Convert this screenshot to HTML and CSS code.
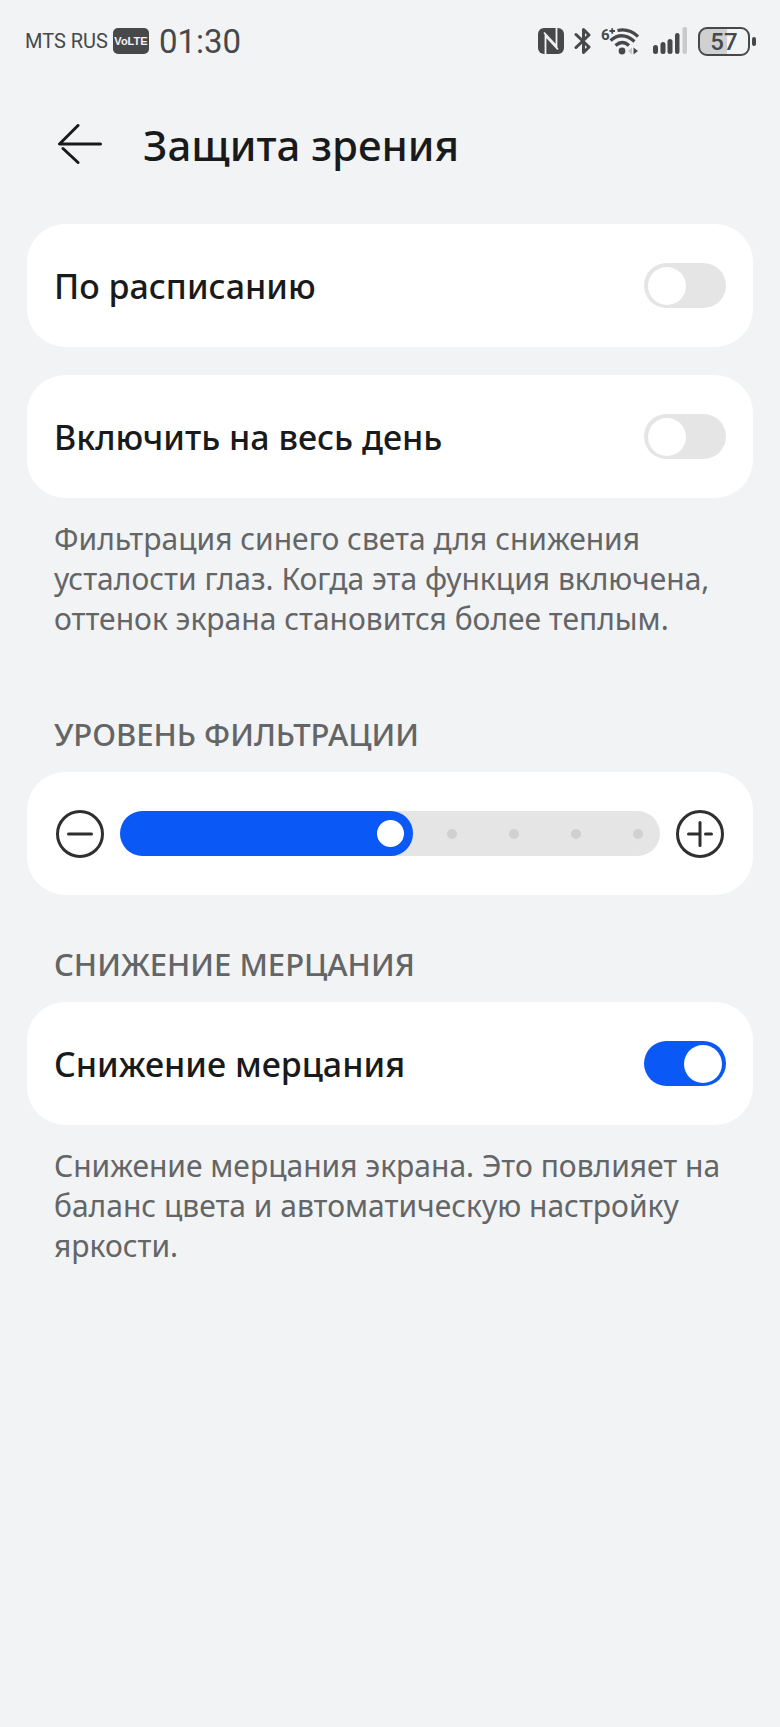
FILE: index.html
```html
<!DOCTYPE html>
<html lang="ru">
<head>
  <meta charset="UTF-8" />
  <meta name="viewport" content="width=device-width, initial-scale=1" />
  <title>Защита зрения</title>
  <link rel="stylesheet" href="styles.css">
</head>
<body>
  <div class="status-bar">
    <span class="carrier">MTS RUS</span>
    <span class="volte">VoLTE</span>
    <span class="time">01:30</span>

    <div class="status-icons">
      <svg class="icon-nfc" width="26" height="26" viewBox="0 0 26 26" aria-label="NFC">
        <rect x="0" y="0" width="26" height="26" rx="6" fill="#474849" />
        <path d="M7.500 26V8L20 21.500" fill="none" stroke="#f1f3f5" stroke-width="1.800" />
        <path d="M6 4.500L18.500 18V0" fill="none" stroke="#f1f3f5" stroke-width="1.800" />
      </svg>
      <svg class="icon-bluetooth" width="18" height="28" viewBox="0 0 18 28" fill="none" stroke="#474849" stroke-width="3" stroke-linecap="round" stroke-linejoin="round" aria-label="Bluetooth">
        <path d="M2 7.500L15 20L9.500 25.500V2.500L15 8L2 20.500" />
      </svg>
      <svg class="icon-wifi" width="38" height="30" viewBox="0 0 38 30" aria-label="Wi-Fi">
        <text class="wifi-generation" x="0" y="14">6</text>
        <path d="M8.500 5H14M11.200 2.300V7.700" stroke="#474849" stroke-width="1.800" />
        <g fill="none" stroke="#474849" stroke-width="3.200">
          <path d="M16.500 4.500Q28 2 37 10.500" />
          <path d="M9.500 14.500Q21 4.500 33.500 15.500" />
          <path d="M14.500 19.500Q21.500 13.500 28 19.500" />
        </g>
        <circle cx="21" cy="25" r="3.400" fill="#474849" />
        <path d="M31 21.500v7l-4-3.500z" fill="#c4c5c6" />
        <path d="M32.500 21.500v7l4.500-3.500z" fill="#474849" />
      </svg>
      <svg class="icon-signal" width="34" height="28" viewBox="0 0 34 28" fill="#474849" aria-label="Сигнал">
        <rect x="0" y="18" width="5" height="9" rx="2.500" />
        <rect x="7.500" y="15" width="5" height="12" rx="2.500" />
        <rect x="14.500" y="12" width="5" height="15" rx="2.500" />
        <rect x="22" y="6" width="4.500" height="21" rx="2.200" />
        <rect x="29.500" y="0" width="4.500" height="27" rx="2" fill="#c9cacb" />
      </svg>
      <div class="battery">57</div>
    </div>
  </div>

  <header class="header">
    <button class="back" aria-label="Назад">
      <svg width="44" height="40" viewBox="0 0 44 40" fill="none" stroke="#191a1b" stroke-width="3" stroke-linecap="round" stroke-linejoin="round">
        <path d="M20 1.500L1.500 20H42.500M5 24.500L20 38.500" />
      </svg>
    </button>
    <h1>Защита зрения</h1>
  </header>

  <main>
    <label class="card">
      <span class="card-name">По расписанию</span>
      <input class="switch" type="checkbox" />
    </label>

    <label class="card">
      <span class="card-name">Включить на весь день</span>
      <input class="switch" type="checkbox" />
    </label>
    <p class="hint">Фильтрация синего света для снижения усталости глаз. Когда эта функция включена, оттенок экрана становится более теплым.</p>

    <h2 class="filter-title" id="filter-title">УРОВЕНЬ ФИЛЬТРАЦИИ</h2>
    <div class="card level">
      <button class="step" aria-label="Уменьшить">
        <svg width="48" height="48" viewBox="0 0 48 48" fill="none" stroke="#2e2f30" stroke-width="3" stroke-linecap="round">
          <circle cx="24" cy="24" r="22.500" />
          <path d="M12.500 24h23" />
        </svg>
      </button>
      <div class="slider">
        <div class="dots">
          <i></i><i></i><i></i><i></i><i></i><i></i><i></i><i></i><i></i>
        </div>
        <input class="range" type="range" min="0" max="8" value="4" style="--level: 50%" aria-labelledby="filter-title" />
      </div>
      <button class="step" aria-label="Увеличить">
        <svg width="48" height="48" viewBox="0 0 48 48" fill="none" stroke="#2e2f30" stroke-width="3" stroke-linecap="round">
          <circle cx="24" cy="24" r="22.500" />
          <path d="M12.500 24H24M29.500 24h6M24 12.500v23" />
        </svg>
      </button>
    </div>

    <h2>СНИЖЕНИЕ МЕРЦАНИЯ</h2>
    <label class="card">
      <span class="card-name">Снижение мерцания</span>
      <input class="switch" type="checkbox" checked />
    </label>
    <p class="hint">Снижение мерцания экрана. Это повлияет на баланс цвета и автоматическую настройку яркости.</p>
  </main>
</body>
</html>
```

FILE: styles.css
```css
* {
  box-sizing: border-box;
}

body {
  margin: 0;
  min-height: 100vh;
  background-color: #f1f3f5;
  color: #191a1b;
  font-family: "Noto Sans", sans-serif;
}

.status-bar {
  display: flex;
  align-items: center;
  height: 82px;
  padding: 0 24px 0 25px;
  color: #474849;
}

.carrier {
  font-family: Roboto, sans-serif;
  font-size: 20px;
}

.volte {
  width: 36px;
  margin: 0 10px 0 5px;
  border-radius: 5px;
  background-color: #474849;
  color: #f1f3f5;
  font-family: "Liberation Sans", sans-serif;
  font-size: 11px;
  font-weight: 700;
  line-height: 26px;
  text-align: center;
}

.time {
  font-family: Roboto, sans-serif;
  font-size: 33px;
}

.status-icons {
  display: flex;
  align-items: center;
  margin-left: auto;
}

.icon-bluetooth {
  margin-left: 10px;
}

.icon-wifi {
  margin-left: 9px;
}

.wifi-generation {
  fill: #474849;
  font-family: Roboto, sans-serif;
  font-size: 15px;
  font-weight: 700;
}

.icon-signal {
  margin: 0 11px 0 14px;
}

.battery {
  position: relative;
  width: 52px;
  height: 29px;
  margin-right: 6px;
  border: 2px solid #474849;
  border-radius: 9px;
  background: linear-gradient(to right, #cfd0d1 57%, transparent 57%);
  font-family: Roboto, sans-serif;
  font-size: 24px;
  font-weight: 500;
  line-height: 26px;
  text-align: center;
}

.battery::after {
  content: "";
  position: absolute;
  top: 8px;
  right: -8px;
  width: 4px;
  height: 9px;
  border-radius: 2px;
  background-color: #474849;
}

.header {
  display: flex;
  align-items: center;
  gap: 41px;
  height: 124px;
  padding: 0 58px;
}

.back,
.step {
  display: flex;
  padding: 0;
  border: none;
  background: none;
  cursor: pointer;
}

h1 {
  margin: 0;
  font-size: 42px;
  font-weight: 500;
}

main {
  padding: 18px 27px;
}

.card {
  display: flex;
  align-items: center;
  justify-content: space-between;
  height: 123px;
  margin-bottom: 28px;
  padding: 0 27px;
  border-radius: 38px;
  background-color: #fff;
}

.card-name {
  font-size: 34px;
  font-weight: 500;
}

.switch {
  appearance: none;
  display: flex;
  align-items: center;
  width: 82px;
  height: 45px;
  margin: 0;
  padding: 0 4px;
  border-radius: 23px;
  background-color: #e5e5e5;
  cursor: pointer;
}

.switch::before {
  content: "";
  width: 38px;
  height: 38px;
  border-radius: 50%;
  background-color: #fff;
}

.switch:checked {
  justify-content: flex-end;
  background-color: #0a59f7;
}

.hint {
  margin: -7px 27px 0;
  color: #646566;
  font-size: 30px;
  line-height: 40px;
}

h2 {
  margin: 47px 27px 16px;
  color: #646566;
  font-size: 31px;
  font-weight: 500;
  line-height: 44px;
}

.filter-title {
  margin-top: 73px;
}

.level {
  gap: 16px;
  padding: 0 29px;
}

.slider {
  flex: 1;
  display: grid;
  height: 45px;
  border-radius: 23px;
  background-color: #e5e5e5;
  overflow: hidden;
}

.dots,
.range {
  grid-area: 1 / 1;
}

.dots {
  display: flex;
  align-items: center;
  justify-content: space-between;
  padding: 0 17px;
}

.dots i {
  width: 10px;
  height: 10px;
  border-radius: 50%;
  background-color: #d0d0d0;
}

.range {
  appearance: none;
  width: 100%;
  height: 45px;
  margin: 0;
  background: linear-gradient(to right, #0a59f7 var(--level), transparent var(--level));
  cursor: pointer;
}

.range::-webkit-slider-thumb {
  appearance: none;
  width: 45px;
  height: 45px;
  border: 9px solid #0a59f7;
  border-radius: 50%;
  background-color: #fff;
}

.range::-moz-range-thumb {
  width: 45px;
  height: 45px;
  border: 9px solid #0a59f7;
  border-radius: 50%;
  background-color: #fff;
}
```
